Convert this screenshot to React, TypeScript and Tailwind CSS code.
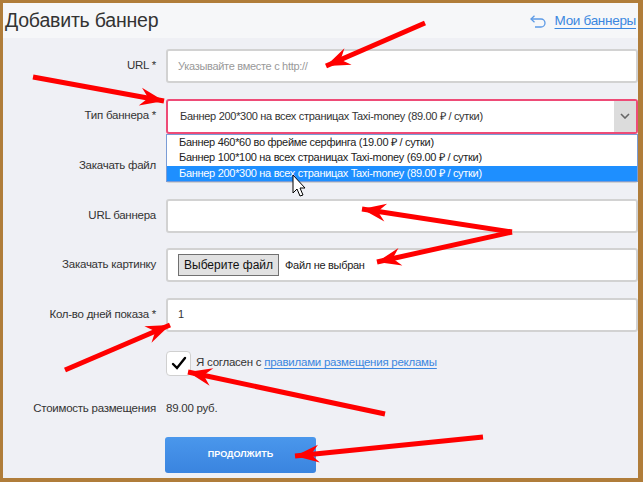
import React from "react";

const font = "font-['Liberation_Sans',Arial,sans-serif]";

type Pt = [number, number];

// наконечник стрелки: треугольник с выемкой
function head(tip: Pt, from: Pt, len = 24, half = 9) {
  const dx = tip[0] - from[0];
  const dy = tip[1] - from[1];
  const d = Math.hypot(dx, dy) || 1;
  const ux = dx / d;
  const uy = dy / d;
  const bx = tip[0] - ux * len;
  const by = tip[1] - uy * len;
  const nx = bx + ux * 8;
  const ny = by + uy * 8;
  const pts: Pt[] = [
    tip,
    [bx - uy * half, by + ux * half],
    [nx, ny],
    [bx + uy * half, by - ux * half],
  ];
  return pts.map((p) => p.join(",")).join(" ");
}

function Arrow({ from, tip }: { from: Pt; tip: Pt }) {
  return (
    <g>
      <line x1={from[0]} y1={from[1]} x2={tip[0]} y2={tip[1]} stroke="#ff0000" strokeWidth={5} />
      <polygon points={head(tip, from)} fill="#ff0000" />
    </g>
  );
}

function Row({ label, children }: { label: string; children: React.ReactNode }) {
  return (
    <div className="flex items-center">
      <div className="w-[153px] shrink-0 text-right text-[11.5px] tracking-[-0.25px] text-[#333]">{label}</div>
      <div className="ml-[10px] flex-1">{children}</div>
    </div>
  );
}

function Input({ children }: { children?: React.ReactNode }) {
  return (
    <div className="flex h-[34px] w-full items-center rounded-[3px] border-2 border-[#d2d2d2] bg-white px-[10px] text-[11px] tracking-[-0.3px]">
      {children}
    </div>
  );
}

export default function App() {
  const options = [
    "Баннер 460*60 во фрейме серфинга (19.00 ₽ / сутки)",
    "Баннер 100*100 на всех страницах Taxi-money (69.00 ₽ / сутки)",
    "Баннер 200*300 на всех страницах Taxi-money (89.00 ₽ / сутки)",
  ];

  return (
    <div className={`relative h-[482px] w-[643px] overflow-hidden border-t-[3px] border-r-[5px] border-b-[4px] border-l-[3px] border-[#b07d3a] bg-[#eff0f5] ${font} text-[#333]`}>
      <div className="flex h-[35px] items-center justify-between bg-[#f6f7f9] px-[2px]">
        <h1 className="text-[19.5px] leading-none tracking-[-0.2px] text-[#333]">Добавить баннер</h1>
        <div className="flex items-center gap-[9px] pt-[2px]">
          <svg width="16" height="13" viewBox="0 0 16 13" fill="none" stroke="#5c9ae6" strokeWidth="1.3">
            <path d="M1 4 H11 A4 4 0 0 1 11 12 H5" />
            <path d="M4.5 0.8 L1 4 L4.5 7.2" />
          </svg>
          <a className="text-[13.5px] tracking-[-0.3px] text-[#3b87e0] underline underline-offset-[3px]">Мои баннеры</a>
        </div>
      </div>

      <div className="flex flex-col gap-[15.5px] pt-[11px]">
        <Row label="URL *">
          <Input>
            <span className="text-[#999]">Указывайте вместе с http://</span>
          </Input>
        </Row>

        <Row label="Тип баннера *">
          <div className="relative">
            <div className="flex h-[35px] w-full items-center rounded-[3px] border-2 border-[#ee4b77] bg-white pl-[12px] text-[11px] tracking-[-0.3px]">
              <span className="flex-1">{options[2]}</span>
              <div className="flex h-full w-[22px] items-center justify-center bg-[#dcdcdc]">
                <svg width="10" height="6" viewBox="0 0 10 6" fill="none" stroke="#666" strokeWidth="1.6">
                  <path d="M1 1 L5 5 L9 1" />
                </svg>
              </div>
            </div>
            <div className="absolute top-[35px] left-0 z-10 w-full border border-[#7a9cd6] bg-white text-[11px] tracking-[-0.3px]">
              {options.map((o, i) => (
                <div
                  key={o}
                  className={`h-[15.5px] pl-[12px] leading-[15.5px] ${i === 2 ? "bg-[#1e8fff] text-white" : "text-[#222]"}`}
                >
                  {o}
                </div>
              ))}
            </div>
          </div>
        </Row>

        <Row label="Закачать файл">
          <Input />
        </Row>

        <Row label="URL баннера">
          <Input />
        </Row>

        <Row label="Закачать картинку">
          <Input>
            <span className="flex h-[22px] items-center border border-[#707070] bg-[#e1e1e1] px-[5px] text-[12px] tracking-normal text-[#111]">
              Выберите файл
            </span>
            <span className="ml-[6px] text-[#222]">Файл не выбран</span>
          </Input>
        </Row>

        <Row label="Кол-во дней показа *">
          <Input>
            <span>1</span>
          </Input>
        </Row>
      </div>

      <div className="mt-[19px] ml-[163px] flex items-center">
        <div className="flex h-[25px] w-[25px] items-center justify-center rounded-[4px] border border-[#d0d0d0] bg-white">
          <svg width="16" height="14" viewBox="0 0 16 14" fill="none" stroke="#000" strokeWidth="2.4" strokeLinecap="round">
            <path d="M2 8 L6 12 L14 2" />
          </svg>
        </div>
        <span className="ml-[5px] text-[11.5px] tracking-[-0.25px]">
          Я согласен с <a className="text-[#3b87e0] underline underline-offset-[2px]">правилами размещения рекламы</a>
        </span>
      </div>

      <div className="mt-[24px] flex items-center text-[11.5px] tracking-[-0.25px]">
        <div className="w-[153px] text-right">Стоимость размещения</div>
        <div className="ml-[10px]">89.00 руб.</div>
      </div>

      <button className="mt-[20px] ml-[162px] h-[36px] w-[151px] rounded-[3px] bg-gradient-to-b from-[#4a97ec] to-[#3a84df] text-[9px] font-bold text-white">
        ПРОДОЛЖИТЬ
      </button>

      <svg className="pointer-events-none absolute top-[-3px] left-[-3px] z-20" width="643" height="482">
        <Arrow from={[425, 23]} tip={[326, 66]} />
        <Arrow from={[33, 77]} tip={[164, 101]} />
        <Arrow from={[512, 232]} tip={[362, 209]} />
        <Arrow from={[512, 232]} tip={[377, 262]} />
        <Arrow from={[65, 370]} tip={[170, 325]} />
        <Arrow from={[385, 414]} tip={[188, 372]} />
        <Arrow from={[483, 437]} tip={[295, 456]} />
        <path d="M293 175 L293 193 L297 189 L300 196 L303 195 L300 188 L305 188 Z" fill="#fff" stroke="#000" strokeWidth="1" />
      </svg>
    </div>
  );
}
